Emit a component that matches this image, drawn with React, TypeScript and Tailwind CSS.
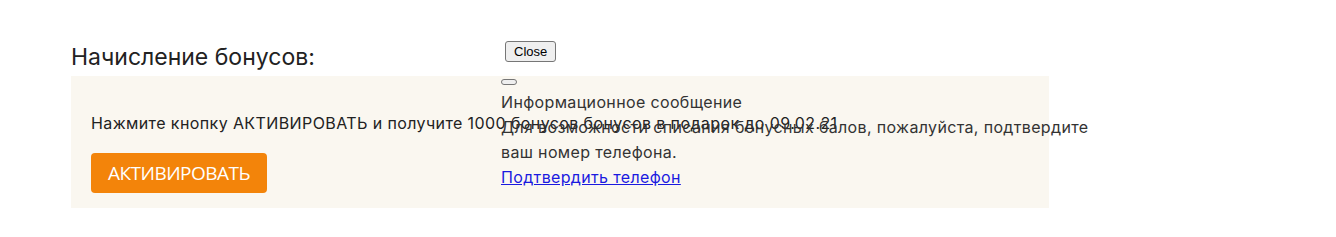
import React from "react";

export default function App() {
  return (
    <div className="relative w-[1336px] h-[237px] bg-white">
      <div className="pl-[71px] pt-[42px] font-['Inter','Roboto',sans-serif]">
        <h2 className="text-[23px] leading-[30px] text-[#222] mb-[4px]">Начисление бонусов:</h2>
        <div className="w-[978px] h-[132px] bg-[#faf7f0] pl-[20px] pt-[35px]">
          <p className="text-[16px] leading-[24px] text-[#222] tracking-[0.4px]">
            Нажмите кнопку АКТИВИРОВАТЬ и получите 1000 бонусов бонусов в подарок до 09.02.21
          </p>
          <button className="mt-[18px] w-[176px] h-[40px] rounded-[4px] bg-[#f3840a] text-white text-[19px] font-['Open_Sans',sans-serif] tracking-[-0.5px]">
            АКТИВИРОВАТЬ
          </button>
        </div>
      </div>
      <div className="absolute left-[501px] top-[41px] w-[600px] font-['Inter','Roboto',sans-serif] text-[#333]">
        <button className="ml-[4px] block h-[21px] px-[8px] border border-[#767676] rounded-[3px] bg-[#efefef] text-[13px] font-['Liberation_Sans',Arial,sans-serif] text-black">
          Close
        </button>
        <button className="mt-[17px] block w-[16px] h-[6px] border border-[#767676] rounded-[3px] bg-[#efefef]"></button>
        <div className="text-[16px] leading-[25px] mt-[5px] w-[592px] tracking-[0.35px]">
          <div>Информационное сообщение</div>
          <div>Для возможности списания бонусных балов, пожалуйста, подтвердите ваш номер телефона.</div>
          <a href="#" className="text-[#1a1ae0] underline">Подтвердить телефон</a>
        </div>
      </div>
    </div>
  );
}
